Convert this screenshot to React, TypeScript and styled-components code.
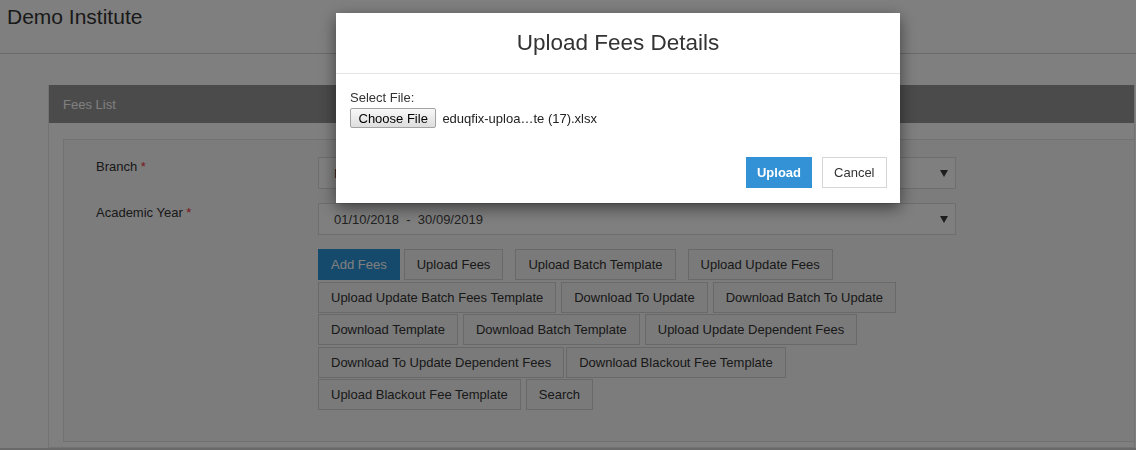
import styled, { createGlobalStyle } from "styled-components";

const GlobalStyle = createGlobalStyle`
  html, body {
    margin: 0;
    padding: 0;
    background: #fff;
    font-family: "Liberation Sans", Arial, sans-serif;
    color: #333;
  }
  * {
    box-sizing: border-box;
  }
`;

interface ActionItem {
  label: string;
  primary?: boolean;
  gap?: number;
}

const actions: ActionItem[] = [
  { label: "Add Fees", primary: true, gap: 4 },
  { label: "Upload Fees", gap: 12 },
  { label: "Upload Batch Template", gap: 12 },
  { label: "Upload Update Fees" },
  { label: "Upload Update Batch Fees Template" },
  { label: "Download To Update" },
  { label: "Download Batch To Update" },
  { label: "Download Template" },
  { label: "Download Batch Template" },
  { label: "Upload Update Dependent Fees" },
  { label: "Download To Update Dependent Fees", gap: 2 },
  { label: "Download Blackout Fee Template" },
  { label: "Upload Blackout Fee Template" },
  { label: "Search" },
];

const Caret = () => (
  <svg width="8" height="7" viewBox="0 0 8 7">
    <path d="M0 0 L8 0 L4 7 Z" fill="#3a3a3a" />
  </svg>
);

const App: React.FC = () => {
  return (
    <>
      <GlobalStyle />
      <Frame>
        <TopBar>
          <Brand>Demo Institute</Brand>
        </TopBar>

        <Main>
          <Panel>
            <PanelHead>Fees List</PanelHead>
            <PanelBody>
              <FilterBox>
                <FieldRow>
                  <FieldLabel>
                    Branch <Required>*</Required>
                  </FieldLabel>
                  <Picker>
                    <PickerValue>Demo Branch</PickerValue>
                    <Caret />
                  </Picker>
                </FieldRow>
                <FieldRow>
                  <FieldLabel>
                    Academic Year <Required>*</Required>
                  </FieldLabel>
                  <Picker>
                    <PickerValue>01/10/2018&nbsp;&nbsp;-&nbsp;&nbsp;30/09/2019</PickerValue>
                    <Caret />
                  </Picker>
                </FieldRow>

                <Actions>
                  {actions.map((a) => (
                    <ActionButton key={a.label} $primary={a.primary} $gap={a.gap ?? 5}>
                      {a.label}
                    </ActionButton>
                  ))}
                </Actions>
              </FilterBox>
            </PanelBody>
          </Panel>
        </Main>

        <Backdrop>
          <Dialog>
            <DialogHeader>
              <DialogTitle>Upload Fees Details</DialogTitle>
            </DialogHeader>
            <DialogBody>
              <FileLabel>Select File:</FileLabel>
              <FileRow>
                <ChooseButton type="button">Choose File</ChooseButton>
                <FileName>eduqfix-uploa…te (17).xlsx</FileName>
              </FileRow>
            </DialogBody>
            <DialogFooter>
              <UploadButton type="button">Upload</UploadButton>
              <CancelButton type="button">Cancel</CancelButton>
            </DialogFooter>
          </Dialog>
        </Backdrop>
      </Frame>
    </>
  );
};

export default App;

const Frame = styled.div`
  width: 1136px;
  height: 450px;
  overflow: hidden;
  border-bottom: 2px solid #d2d2d2;
  background: #fff;
`;

const TopBar = styled.header`
  height: 54px;
  padding: 5px 7px 0;
  border-bottom: 1px solid #d4d4d4;
  background: #fff;
`;

const Brand = styled.div`
  font-size: 21px;
  color: #333;
`;

const Main = styled.main`
  padding: 31px 0 0 48px;
`;

const Panel = styled.section`
  width: 1087px;
  border: 1px solid #e6e6e6;
  border-top: none;
  background: #fff;
`;

const PanelHead = styled.div`
  height: 38px;
  display: flex;
  align-items: center;
  padding-left: 14px;
  background: #969696;
  color: #fff;
  font-size: 13px;
`;

const PanelBody = styled.div`
  padding: 16px 0 5px 14px;
`;

const FilterBox = styled.div`
  border: 1px solid #e4e4e4;
  border-right: none;
  background: #f8f8f8;
  padding: 17px 0 31px 32px;
`;

const FieldRow = styled.div`
  display: flex;
  align-items: flex-start;
  margin-bottom: 14px;
`;

const FieldLabel = styled.label`
  width: 222px;
  padding-top: 1px;
  font-size: 13px;
  line-height: 18px;
  color: #333;
`;

const Required = styled.span`
  color: #f0323c;
`;

const Picker = styled.div`
  width: 638px;
  height: 32px;
  display: flex;
  align-items: center;
  padding: 0 7px 0 15px;
  border: 1px solid #dcdcdc;
  background: #fff;
`;

const PickerValue = styled.span`
  flex: 1;
  font-size: 13px;
  color: #444;
`;

const Actions = styled.div`
  display: flex;
  flex-wrap: wrap;
  row-gap: 1.5px;
  width: 638px;
  margin-left: 222px;
`;

const ActionButton = styled.button<{ $primary?: boolean; $gap: number }>`
  height: 31px;
  margin-right: ${({ $gap }) => $gap}px;
  padding: 0 12px;
  font-family: "Liberation Sans", Arial, sans-serif;
  font-size: 13px;
  white-space: nowrap;
  border: 1px solid ${({ $primary }) => ($primary ? "#2b94d8" : "#d2d2d2")};
  background: ${({ $primary }) => ($primary ? "#2b94d8" : "#f4f4f4")};
  color: ${({ $primary }) => ($primary ? "#fff" : "#333")};
  border-radius: 0;
  cursor: pointer;
`;

const Backdrop = styled.div`
  position: fixed;
  inset: 0;
  background: rgba(0, 0, 0, 0.5);
`;

const Dialog = styled.div`
  width: 564px;
  height: 190px;
  margin: 13px 0 0 336px;
  background: #fff;
  box-shadow: 0 5px 15px rgba(0, 0, 0, 0.5);
  display: flex;
  flex-direction: column;
`;

const DialogHeader = styled.div`
  padding: 17px 15px;
  border-bottom: 1px solid #e5e5e5;
  text-align: center;
`;

const DialogTitle = styled.h4`
  margin: 0;
  font-size: 22.5px;
  line-height: 26px;
  font-weight: 400;
  color: #333;
`;

const DialogBody = styled.div`
  padding: 16px 14px 0;
`;

const FileLabel = styled.div`
  font-size: 13px;
  line-height: 15px;
  color: #333;
`;

const FileRow = styled.div`
  display: flex;
  align-items: center;
  margin-top: 3px;
`;

const ChooseButton = styled.button`
  height: 20px;
  padding: 0 7.5px;
  font-family: "Liberation Sans", Arial, sans-serif;
  font-size: 13px;
  color: #000;
  border: 1px solid #a3a3a3;
  border-radius: 2px;
  background: linear-gradient(#f8f8f8, #dddddd);
`;

const FileName = styled.span`
  margin-left: 6px;
  font-size: 13px;
  color: #222;
`;

const DialogFooter = styled.div`
  display: flex;
  justify-content: flex-end;
  gap: 9.5px;
  padding: 29px 13px 14px;
`;

const FooterButton = styled.button`
  height: 31px;
  padding: 0 11.5px;
  font-family: "Liberation Sans", Arial, sans-serif;
  font-size: 13px;
  border-radius: 0;
  cursor: pointer;
`;

const UploadButton = styled(FooterButton)`
  padding: 0 10px;
  background: #3292d5;
  border: 1px solid #3292d5;
  color: #fff;
  font-weight: 700;
`;

const CancelButton = styled(FooterButton)`
  background: #fff;
  border: 1px solid #d6d6d6;
  color: #333;
`;
